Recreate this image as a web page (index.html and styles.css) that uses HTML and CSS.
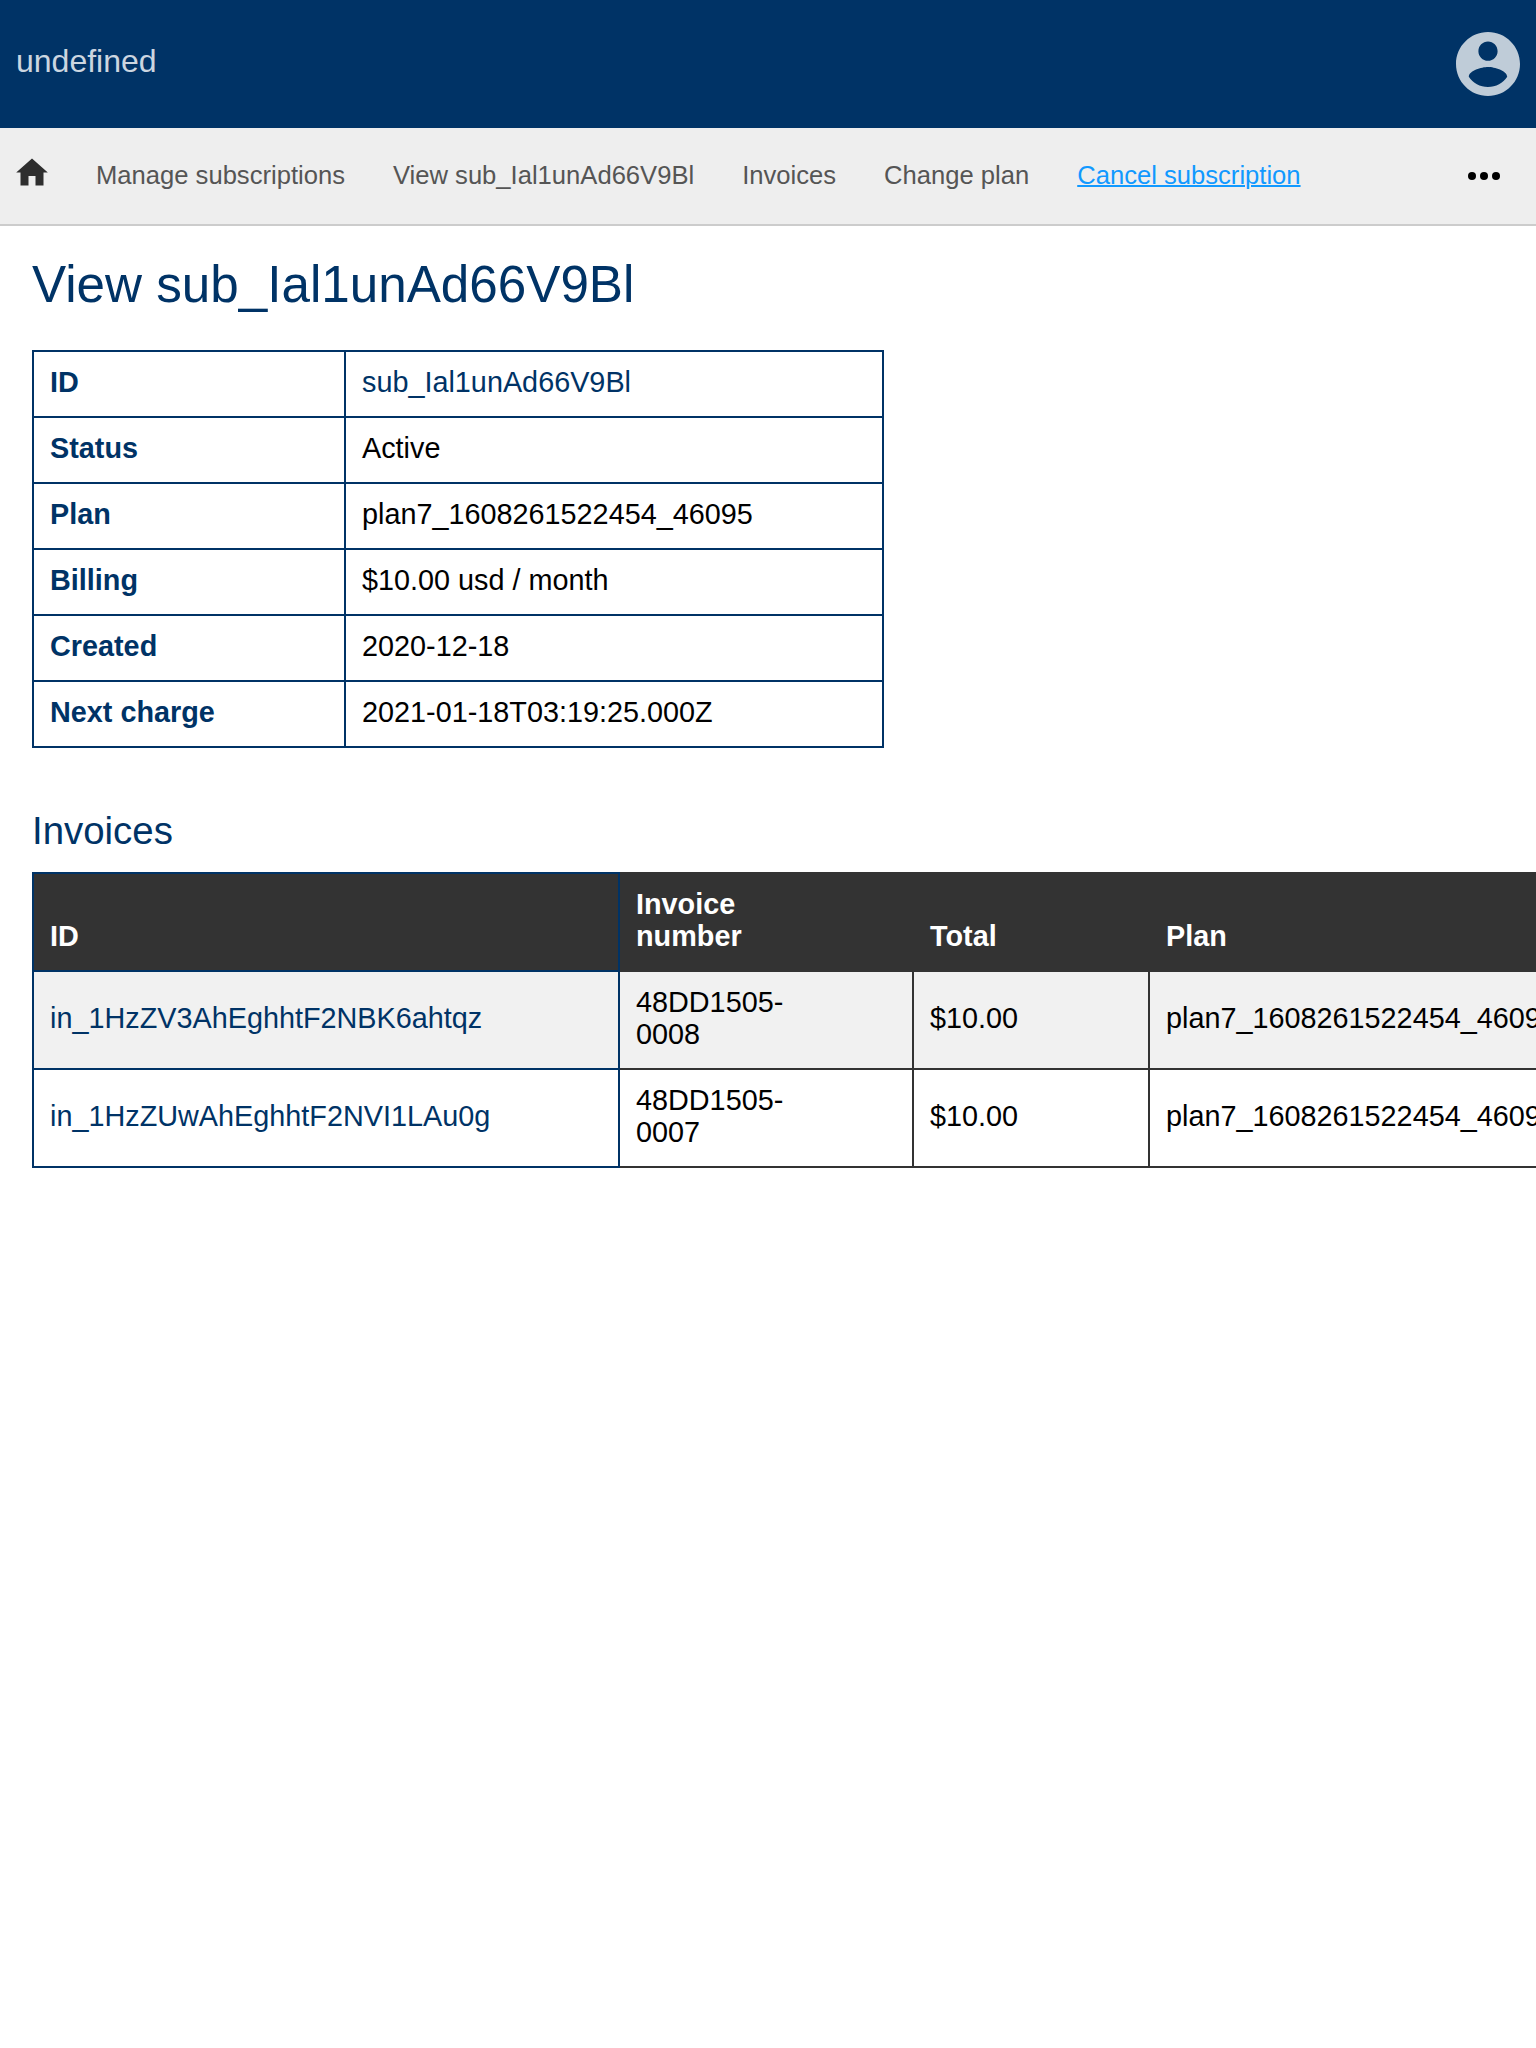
FILE: index.html
```html
<!DOCTYPE html>
<html lang="en">
<head>
<meta charset="utf-8">
<title>View subscription</title>
<link rel="stylesheet" href="styles.css">
</head>
<body>
<header class="header">
  <span class="brand">undefined</span>
  <svg class="account" viewBox="2 2 20 20"><path d="M12 2C6.48 2 2 6.48 2 12s4.48 10 10 10 10-4.48 10-10S17.52 2 12 2zm0 3c1.66 0 3 1.34 3 3s-1.34 3-3 3-3-1.34-3-3 1.34-3 3-3zm0 14.2c-2.5 0-4.71-1.28-6-3.22.03-1.99 4-3.08 6-3.08 1.99 0 5.97 1.09 6 3.08-1.29 1.94-3.5 3.22-6 3.22z"/></svg>
</header>
<nav class="nav">
  <svg class="home" viewBox="0 0 32 32"><path d="M16 2.5 31.800 16.500H27.500V29.500H19.500V20H12.500V29.500H4.500V16.500H.2z"/></svg>
  <a>Manage subscriptions</a>
  <a>View sub_Ial1unAd66V9Bl</a>
  <a>Invoices</a>
  <a>Change plan</a>
  <a class="current">Cancel subscription</a>
  <svg class="more" viewBox="0 0 32 8"><circle cx="4" cy="4" r="4"/><circle cx="16" cy="4" r="4"/><circle cx="28" cy="4" r="4"/></svg>
</nav>
<main class="content">
  <h1>View sub_Ial1unAd66V9Bl</h1>
  <table class="details">
    <tr><th>ID</th><td><a>sub_Ial1unAd66V9Bl</a></td></tr>
    <tr><th>Status</th><td>Active</td></tr>
    <tr><th>Plan</th><td>plan7_1608261522454_46095</td></tr>
    <tr><th>Billing</th><td>$10.00 usd / month</td></tr>
    <tr><th>Created</th><td>2020-12-18</td></tr>
    <tr><th>Next charge</th><td>2021-01-18T03:19:25.000Z</td></tr>
  </table>
  <h2>Invoices</h2>
  <table class="invoices">
    <colgroup><col class="col-id"><col class="col-number"><col class="col-total"><col class="col-plan"></colgroup>
    <thead>
      <tr><th class="id">ID</th><th class="number">Invoice number</th><th>Total</th><th>Plan</th></tr>
    </thead>
    <tbody>
      <tr><td class="id"><a>in_1HzZV3AhEghhtF2NBK6ahtqz</a></td><td class="number">48DD1505-0008</td><td>$10.00</td><td>plan7_1608261522454_46095</td></tr>
      <tr><td class="id"><a>in_1HzZUwAhEghhtF2NVI1LAu0g</a></td><td class="number">48DD1505-0007</td><td>$10.00</td><td>plan7_1608261522454_46095</td></tr>
    </tbody>
  </table>
</main>
</body>
</html>
```
FILE: styles.css
```css
* { box-sizing: border-box; }
html { overflow: hidden; }
body {
  margin: 0;
  height: 2048px;
  overflow: hidden;
  background: #fff;
  color: #000;
  font-family: "Liberation Sans", Arial, sans-serif;
  font-size: 32px;
}
.header {
  display: flex;
  align-items: center;
  justify-content: space-between;
  height: 128px;
  padding: 0 16px;
  background: #036;
}
.brand { color: #ccd6e0; line-height: 36px; padding-bottom: 6px; }
.account { width: 64px; height: 64px; fill: #bfccd8; }
.nav {
  display: flex;
  align-items: center;
  gap: 48px;
  height: 98px;
  padding: 0 36px 0 16px;
  background: #eee;
  border-bottom: 2px solid #ccc;
  color: #555;
  font-size: 25.6px;
  line-height: 32px;
  white-space: nowrap;
}
.nav a { padding-bottom: 2px; }
.home { width: 32px; height: 32px; margin-bottom: 8px; fill: #2e2e2e; }
.nav .current { color: #19f; text-decoration: underline; text-decoration-thickness: 2px; }
.more { width: 32px; height: 8px; margin-left: auto; fill: #000; }
.content { padding: 29px 32px; }
h1, h2 { margin: 0; color: #036; font-weight: 400; }
h1 { font-size: 51.2px; line-height: 60px; margin-bottom: 35px; }
h2 { font-size: 38.4px; line-height: 44px; margin: 61px 0 19px; }
table {
  border-collapse: collapse;
  table-layout: fixed;
  font-size: 28.8px;
  line-height: 32px;
}
th, td { padding: 14px 16px 18px; text-align: left; vertical-align: middle; }
td a { color: #036; }
.details { width: 852px; }
.details th, .details td { border: 2px solid #036; }
.details th { width: 312px; color: #036; }
.invoices { width: 1584px; }
.col-id { width: 586px; }
.col-number { width: 294px; }
.col-total { width: 236px; }
.col-plan { width: 466px; }
.invoices th, .invoices td { border: 2px solid #333; }
.invoices thead th { background: #333; color: #fff; vertical-align: bottom; }
.invoices .id, .invoices thead .id { border-color: #036; }
.invoices .number { padding-right: 96px; }
.invoices tbody tr:nth-child(odd) { background: #f1f1f1; }
```
